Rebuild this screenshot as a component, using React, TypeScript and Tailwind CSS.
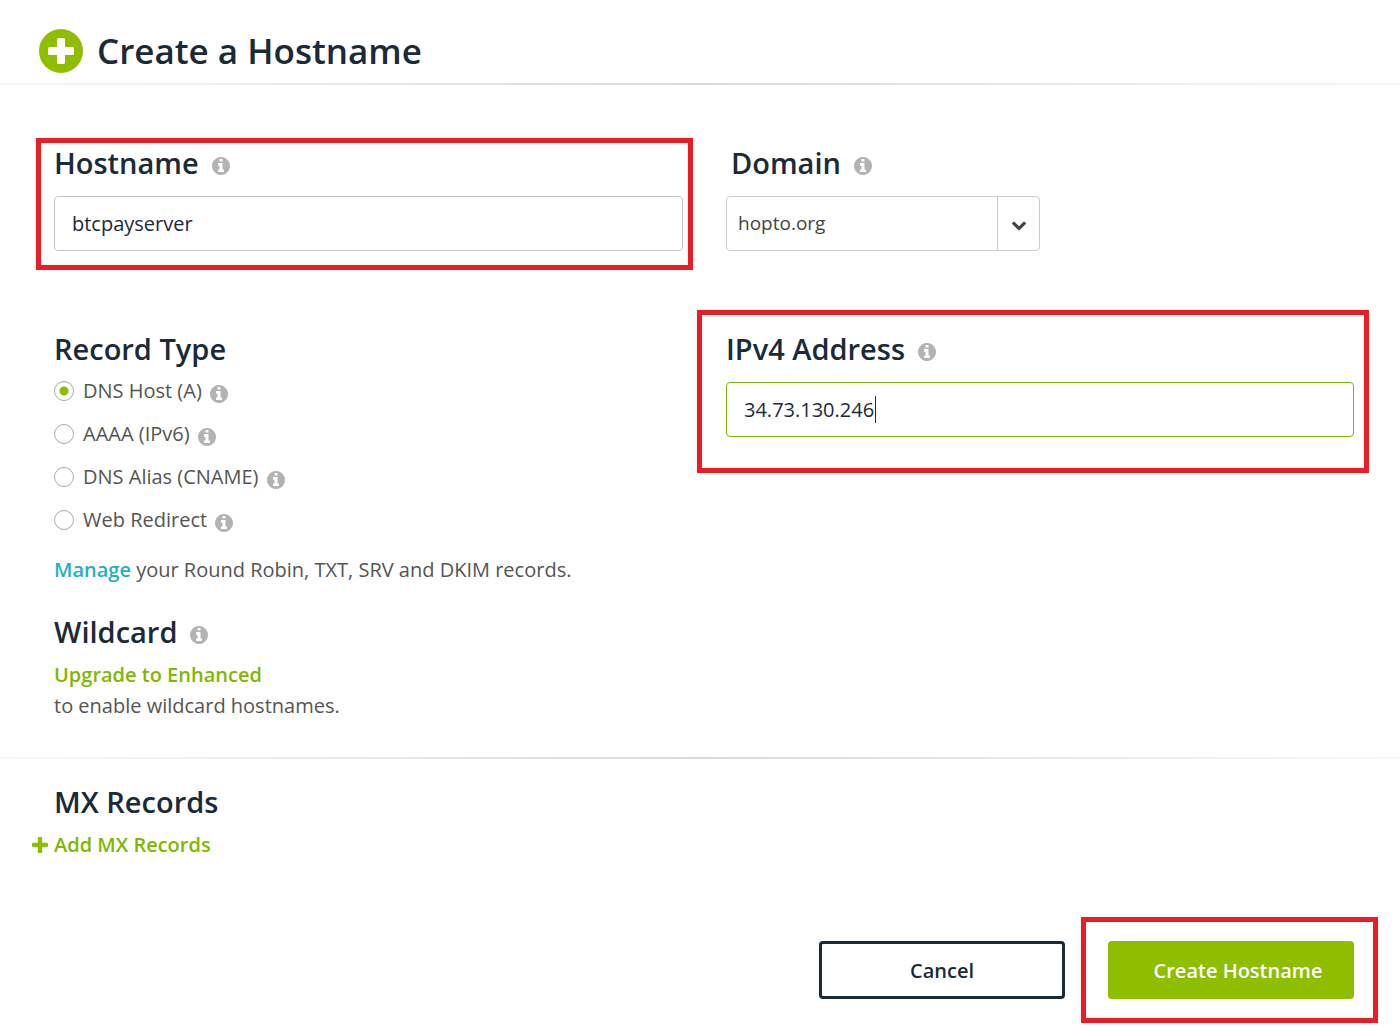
import React from 'react'

const recordTypes = ['DNS Host (A)', 'AAAA (IPv6)', 'DNS Alias (CNAME)', 'Web Redirect']

const InfoIcon = () => (
  <svg viewBox="128 128 1536 1536" className="mt-1.5 size-[18px] shrink-0 fill-[#b3b3b3]">
    <path d="M1152 1376v-160q0-14-9-23t-23-9h-96v-512q0-14-9-23t-23-9h-320q-14 0-23 9t-9 23v160q0 14 9 23t23 9h96v320h-96q-14 0-23 9t-9 23v160q0 14 9 23t23 9h448q14 0 23-9t9-23zm-128-896v-160q0-14-9-23t-23-9h-192q-14 0-23 9t-9 23v160q0 14 9 23t23 9h192q14 0 23-9t9-23zm640 416q0 209-103 385.500t-279.500 279.500-385.500 103-385.500-103-279.500-279.500-103-385.500 103-385.500 279.500-279.500 385.500-103 385.500 103 279.500 279.500 103 385.500z" />
  </svg>
)

const PlusIcon = () => (
  <svg viewBox="192 128 1408 1408" className="size-4 shrink-0 fill-[#8fbe00]">
    <path d="M1600 736v192q0 40-28 68t-68 28h-416v416q0 40-28 68t-68 28h-192q-40 0-68-28t-28-68v-416h-416q-40 0-68-28t-28-68v-192q0-40 28-68t68-28h416v-416q0-40 28-68t68-28h192q40 0 68 28t28 68v416h416q40 0 68 28t28 68z" />
  </svg>
)

const ChevronIcon = () => (
  <svg viewBox="90 480 1612 1140" className="h-2.5 w-3.5 fill-[#444]">
    <path d="M1683 808l-742 741q-19 19-45 19t-45-19l-742-741q-19-19-19-45.500t19-45.500l166-165q19-19 45-19t45 19l531 531 531-531q19-19 45-19t45 19l166 165q19 19 19 45.500t-19 45.500z" />
  </svg>
)

const CirclePlusIcon = () => (
  <svg viewBox="0 0 44 44" className="size-11 shrink-0">
    <circle cx="22" cy="22" r="22" fill="#8fbe00" />
    <rect x="9" y="18" width="26" height="8" rx="1.500" fill="white" />
    <rect x="18" y="9" width="8" height="26" rx="1.500" fill="white" />
  </svg>
)

const Divider = () => (
  <div className="h-0.5 bg-linear-to-r from-[#f8f8f8] via-[#dadada] to-[#f8f8f8]" />
)

const heading = 'text-[29px] leading-10 font-semibold text-[#1b2a38]'
const textInput =
  'block h-[55px] w-full rounded-sm border bg-white px-[17px] text-[20px] text-[#1b2a38] outline-none'

const App = () => {
  return (
    <div className="bg-white font-['Open_Sans',sans-serif] text-[20px] leading-[31px] text-[#555]">
      <header className="flex items-center gap-3.5 pt-[29px] pb-2.5 pl-[39px]">
        <CirclePlusIcon />
        <h1 className="text-[35px] leading-[44px] font-semibold text-[#1b2a38]">
          Create a Hostname
        </h1>
      </header>
      <Divider />

      <form onSubmit={(e) => e.preventDefault()}>
        <div className="grid grid-cols-[657fr_672fr] gap-x-1 gap-y-10 pt-[53px] pr-[31px] pb-9 pl-9">
          <div className="border-5 border-[#ed1c24] pr-[5px] pb-3.5 pl-[13px]">
            <div className="flex items-center gap-[13px]">
              <label htmlFor="hostname" className={heading}>
                Hostname
              </label>
              <InfoIcon />
            </div>
            <input
              id="hostname"
              type="text"
              defaultValue="btcpayserver"
              className={`${textInput} mt-[13px] border-[#c4c4c4]`}
            />
          </div>

          <div className="pt-[5px] pl-[29px]">
            <div className="flex items-center gap-[13px] pl-[5px]">
              <label htmlFor="domain" className={heading}>
                Domain
              </label>
              <InfoIcon />
            </div>
            <div className="relative mt-[13px] w-[314px]">
              <select
                id="domain"
                className="block h-[55px] w-full appearance-none rounded-sm border border-[#ccc] bg-white px-[11px] text-[19px] text-[#444]"
              >
                <option>hopto.org</option>
              </select>
              <span className="pointer-events-none absolute inset-y-px right-px flex w-[42px] items-center justify-center border-l border-[#ccc] pt-1">
                <ChevronIcon />
              </span>
            </div>
          </div>

          <div className="pt-[19px] pl-[18px]">
            <fieldset>
              <legend className={heading}>Record Type</legend>
              <div className="flex flex-col gap-3 pt-1.5">
                {recordTypes.map((type, i) => (
                  <div key={type} className="flex items-center gap-2">
                    <label className="flex items-center gap-[9px]">
                      <input
                        type="radio"
                        name="recordType"
                        defaultChecked={i === 0}
                        className="size-5 appearance-none rounded-full border border-[#aaa] bg-white checked:bg-[radial-gradient(circle,#8fbe00_4px,white_5px)]"
                      />
                      {type}
                    </label>
                    <InfoIcon />
                  </div>
                ))}
              </div>
            </fieldset>
            <p className="mt-[19px]">
              <a href="#manage" className="font-semibold text-[#1fb1c1]">
                Manage
              </a>{' '}
              your Round Robin, TXT, SRV and DKIM records.
            </p>
            <div className="mt-[27px] flex items-center gap-[13px]">
              <h2 className={heading}>Wildcard</h2>
              <InfoIcon />
            </div>
            <p className="mt-[7px]">
              <a href="#upgrade" className="font-semibold text-[#7fb800]">
                Upgrade to Enhanced
              </a>
              <br />
              to enable wildcard hostnames.
            </p>
          </div>

          <div className="self-start border-5 border-[#ed1c24] pt-3.5 pr-2.5 pb-[31px] pl-6">
            <div className="flex items-center gap-[13px]">
              <label htmlFor="ipv4" className={heading}>
                IPv4 Address
              </label>
              <InfoIcon />
            </div>
            <div className="relative mt-[13px]">
              <input
                id="ipv4"
                type="text"
                defaultValue="34.73.130.246"
                className={`${textInput} border-[#7fb800] caret-transparent`}
              />
              <span className="pointer-events-none absolute top-3.5 left-[149px] h-[27px] w-px bg-[#1b2a38]" />
            </div>
          </div>
        </div>
        <Divider />

        <div className="pt-[23px] pl-8">
          <h2 className={`${heading} pl-[22px]`}>MX Records</h2>
          <a href="#mx" className="mt-[7px] flex items-center gap-1.5 font-semibold text-[#7fb800]">
            <PlusIcon />
            Add MX Records
          </a>
        </div>

        <div className="mt-[57px] flex items-center justify-end gap-4 pr-[22px] pb-1">
          <button
            type="button"
            className="h-[58px] w-[246px] rounded-sm border-3 border-[#1b2a38] font-semibold text-[#1b2a38]"
          >
            Cancel
          </button>
          <div className="border-5 border-[#ed1c24] py-[19px] pr-[19px] pl-[22px]">
            <button
              type="submit"
              className="block h-[58px] w-[246px] rounded-sm bg-[#8fbe00] pl-3.5 font-semibold text-white"
            >
              Create Hostname
            </button>
          </div>
        </div>
      </form>
    </div>
  )
}

export default App
